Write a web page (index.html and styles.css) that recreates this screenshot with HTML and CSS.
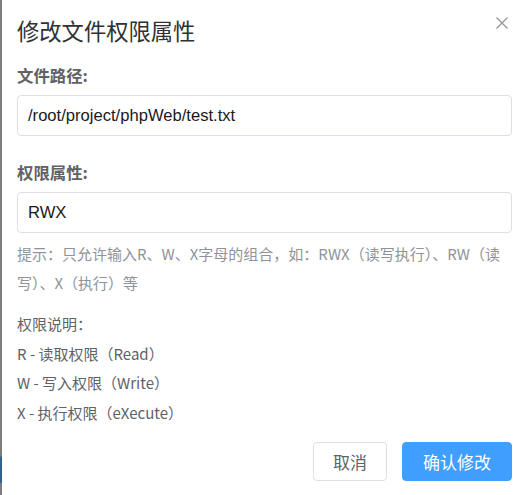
FILE: index.html
```html
<!DOCTYPE html>
<html lang="zh-CN">
<head>
<meta charset="utf-8">
<title>修改文件权限属性</title>
<link rel="stylesheet" href="styles.css">
</head>
<body>
<div class="page">
  <div class="backdrop"></div>
  <div class="dialog">
    <div class="dialog-header">
      <div class="dialog-title">修改文件权限属性</div>
      <button class="close-btn" aria-label="关闭">
        <svg width="12" height="12" viewBox="0 0 12 12"><path d="M0.5 0.5 L11.5 11.5 M11.5 0.5 L0.5 11.5" stroke="#909399" stroke-width="1.2" fill="none"/></svg>
      </button>
    </div>
    <div class="field-label first">文件路径:</div>
    <div class="input-box">/root/project/phpWeb/test.txt</div>
    <div class="field-label second">权限属性:</div>
    <div class="input-box">RWX</div>
    <div class="hint">提示：只允许输入R、W、X字母的组合，如：RWX（读写执行）、RW（读<br>写）、X（执行）等</div>
    <div class="desc">
      <div>权限说明：</div>
      <div>R - 读取权限（Read）</div>
      <div>W - 写入权限（Write）</div>
      <div>X - 执行权限（eXecute）</div>
    </div>
    <div class="footer">
      <button class="btn btn-default">取消</button>
      <button class="btn btn-primary">确认修改</button>
    </div>
  </div>
</div>
</body>
</html>
```
FILE: styles.css
```css
html, body {
  margin: 0;
  padding: 0;
  background: #ffffff;
}
.page {
  display: flex;
  width: 525px;
  height: 495px;
  overflow: hidden;
}
.backdrop {
  width: 2px;
  flex: none;
  background: linear-gradient(to bottom, #7d7d7d 0, #7d7d7d 455px, #2f5f94 458px, #2f5f94 482px, #7d7d7d 484px);
}
.dialog {
  flex: 1;
  background: #ffffff;
  padding: 0 13px 0 15px;
  font-family: "Noto Sans CJK SC", "Noto Sans", sans-serif;
  color: #606266;
}
.dialog-header {
  display: flex;
  justify-content: space-between;
  align-items: flex-start;
  padding-top: 16px;
}
.dialog-title {
  font-size: 22.3px;
  line-height: 28px;
  color: #303133;
}
.close-btn {
  border: none;
  background: none;
  padding: 0;
  margin: 1px 4px 0 0;
  width: 12px;
  height: 12px;
  display: flex;
}
.field-label {
  font-size: 16.4px;
  font-weight: 700;
  line-height: 22px;
  color: #606266;
  margin-bottom: 9px;
}
.field-label.first {
  margin-top: 20px;
}
.field-label.second {
  margin-top: 25px;
}
.input-box {
  box-sizing: border-box;
  height: 41px;
  border: 1px solid #dcdfe6;
  border-radius: 4px;
  padding: 0 10px;
  display: flex;
  align-items: center;
  font-family: "Liberation Sans", Arial, sans-serif;
  font-size: 16.6px;
  color: #1a1a1a;
}
.hint {
  margin-top: 6px;
  font-size: 15px;
  line-height: 29px;
  color: #909399;
  white-space: nowrap;
}
.desc {
  margin-top: 12px;
  font-size: 15px;
  line-height: 29.6px;
  color: #606266;
}
.footer {
  display: flex;
  justify-content: flex-end;
  gap: 15px;
  margin-top: 15px;
}
.btn {
  box-sizing: border-box;
  height: 39px;
  border-radius: 4px;
  font-family: "Noto Sans CJK SC", "Noto Sans", sans-serif;
  font-size: 17px;
  padding: 0;
  cursor: pointer;
}
.btn-default {
  width: 74px;
  background: #ffffff;
  border: 1px solid #dcdfe6;
  color: #606266;
}
.btn-primary {
  width: 110px;
  background: #409eff;
  border: 1px solid #409eff;
  color: #ffffff;
}
```
